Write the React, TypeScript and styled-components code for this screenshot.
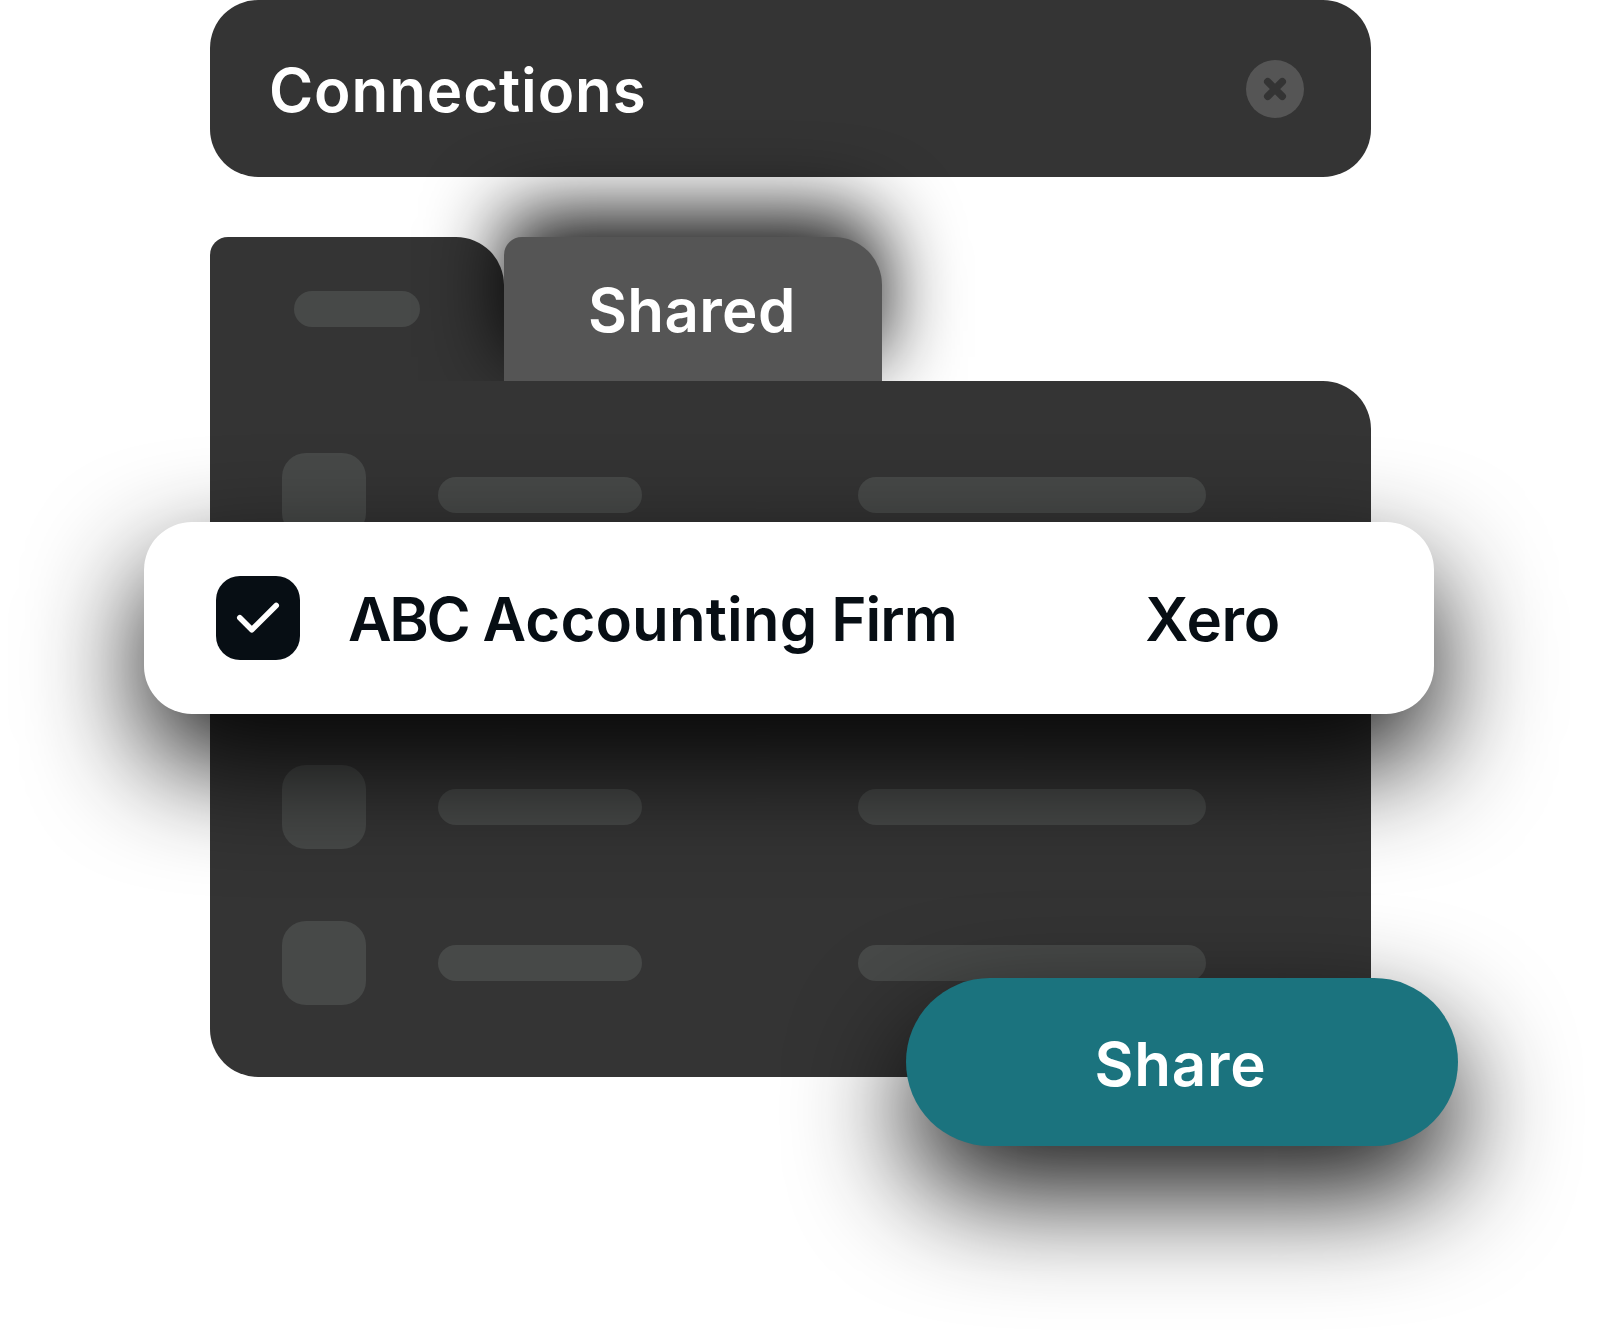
import React from 'react';
import styled, { createGlobalStyle } from 'styled-components';

const GlobalStyle = createGlobalStyle`
  * {
    box-sizing: border-box;
  }

  body {
    margin: 0;
    background: #fff;
    font-family: Inter, 'Open Sans', sans-serif;
  }
`;

const Page = styled.main`
  width: 1602px;
  height: 1338px;
  padding: 0 231px 0 210px;
  overflow: hidden;
`;

const Header = styled.header`
  display: flex;
  align-items: center;
  justify-content: space-between;
  height: 177px;
  padding: 0 67px 0 59px;
  border-radius: 48px;
  background: #343434;
`;

const Label = styled.span<{ $spacing?: number }>`
  color: inherit;
  font-size: 60px;
  font-weight: 600;
  line-height: 72px;
  letter-spacing: ${p => p.$spacing || 0}px;
  white-space: nowrap;
`;

const Title = styled(Label).attrs({ as: 'h1' })`
  margin: 2px 0 0;
  color: #fff;
`;

const CloseButton = styled.button`
  display: flex;
  width: 58px;
  height: 58px;
  padding: 0;
  border: 0;
  background: none;
`;

const Tabs = styled.div`
  display: flex;
  height: 144px;
  margin-top: 60px;
`;

const Tab = styled.div<{ $active?: boolean }>`
  display: flex;
  width: ${p => (p.$active ? 378 : 294)}px;
  padding: ${p => (p.$active ? '37px 0 0 84px' : '54px 0 0 84px')};
  border-radius: 18px 48px 0 0;
  background: ${p => (p.$active ? '#555' : '#343434')};
  box-shadow: ${p => (p.$active ? '0 -24px 78px rgba(0, 0, 0, 0.95)' : 'none')};
  color: #fff;
`;

const Pill = styled.div<{ $width: number }>`
  width: ${p => p.$width}px;
  height: 36px;
  border-radius: 18px;
  background: #474948;
`;

const Panel = styled.section`
  position: relative;
  display: flex;
  flex-direction: column;
  gap: 72px;
  height: 696px;
  padding: 72px;
  border-radius: 0 48px 48px 48px;
  background: #343434;
`;

const Row = styled.div`
  display: grid;
  grid-template-columns: 84px 348px 348px;
  column-gap: 72px;
  align-items: center;
  height: 84px;
`;

const Checkbox = styled.div<{ $checked?: boolean }>`
  width: 84px;
  height: 84px;
  border-radius: 24px;
  background: ${p => (p.$checked ? '#070e14' : '#474948')};
`;

/* lifted out of the list: wider than the panel and covering the row above */
const SelectedRow = styled.div`
  position: relative;
  display: flex;
  align-items: center;
  flex-shrink: 0;
  height: 192px;
  margin: -87px -135px -21px -138px;
  padding: 0 154px 0 72px;
  border-radius: 48px;
  background: #fff;
  box-shadow: 0 48px 114px rgba(0, 0, 0, 0.91);
  color: #070e14;
`;

const Firm = styled.div`
  display: flex;
  flex: 1;
  gap: 14px;
  margin: 2px 0 0 48px;
`;

const Provider = styled(Label)`
  margin-top: 2px;
`;

const ShareButton = styled.button`
  position: absolute;
  right: -87px;
  bottom: -69px;
  width: 552px;
  height: 168px;
  padding: 4px 3px 0 0;
  border: 0;
  border-radius: 84px;
  background: #1b737e;
  box-shadow: 0 48px 114px rgba(0, 0, 0, 0.91);
  color: #fff;
  font-family: inherit;
`;

const CloseIcon = () => (
  <svg width='58' height='58' viewBox='0 0 58 58'>
    <circle cx='29' cy='29' r='29' fill='#555' />
    <path
      d='M21.7 21.7L36.3 36.3M36.3 21.7L21.7 36.3'
      stroke='#343434'
      strokeWidth='7.4'
      strokeLinecap='round'
    />
  </svg>
);

const CheckIcon = () => (
  <svg width='84' height='84' viewBox='0 0 84 84' fill='none'>
    <path
      d='M23.8 41.8L35.8 53.8L60.2 29.5'
      stroke='#fff'
      strokeWidth='5.6'
      strokeLinecap='round'
      strokeLinejoin='round'
    />
  </svg>
);

const PlaceholderRow = () => (
  <Row>
    <Checkbox />
    <Pill $width={204} />
    <Pill $width={348} />
  </Row>
);

const App: React.FC = () => (
  <>
    <GlobalStyle />
    <Page>
      <Header>
        <Title $spacing={0.9}>Connections</Title>
        <CloseButton aria-label='Close'>
          <CloseIcon />
        </CloseButton>
      </Header>

      <Tabs>
        <Tab>
          <Pill $width={126} />
        </Tab>
        <Tab $active>
          <Label $spacing={0.35}>Shared</Label>
        </Tab>
      </Tabs>

      <Panel>
        <PlaceholderRow />
        <SelectedRow>
          <Checkbox $checked>
            <CheckIcon />
          </Checkbox>
          <Firm>
            <Label $spacing={-2.3}>ABC</Label>
            <Label $spacing={0.1}>Accounting</Label>
            <Label $spacing={-1}>Firm</Label>
          </Firm>
          <Provider $spacing={-0.3}>Xero</Provider>
        </SelectedRow>
        <PlaceholderRow />
        <PlaceholderRow />
        <ShareButton>
          <Label $spacing={0.75}>Share</Label>
        </ShareButton>
      </Panel>
    </Page>
  </>
);

export default App;
